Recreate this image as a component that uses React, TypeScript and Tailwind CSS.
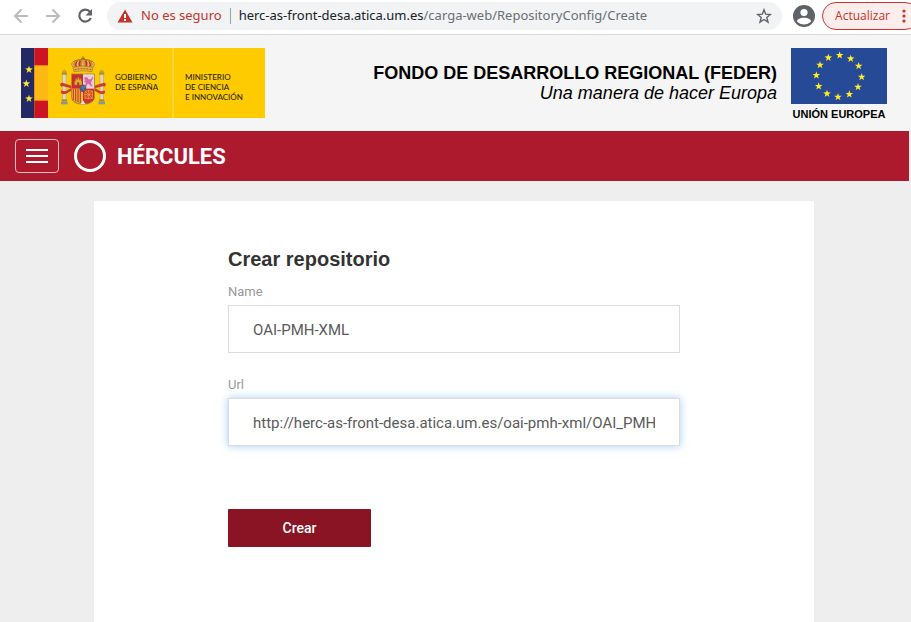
import React from "react";

const STAR = "0,-12 2.8,-3.9 11.4,-3.7 4.6,1.5 7.1,9.7 0,4.8 -7.1,9.7 -4.6,1.5 -11.4,-3.7 -2.8,-3.9";

const EU_STARS = [
  [146, 22], [179, 32], [203, 54], [212, 87], [201, 117], [175, 139],
  [141, 147], [108, 137], [83, 115], [76, 82], [87, 51], [112, 29],
];

function BrowserBar() {
  return (
    <div className="flex h-[35px] items-center overflow-hidden border-b border-[#d9dadb] bg-white pb-[3px] pl-[11px] font-['Noto_Sans','Open_Sans',sans-serif]">
      <div className="flex shrink-0 gap-3">
        <button aria-label="Atrás" className="text-[#babcbe]">
          <svg className="size-5" viewBox="0 0 20 20" fill="none" stroke="currentColor" strokeWidth="2"><path d="M17 10H4M10.5 3.5 4 10l6.5 6.5" /></svg>
        </button>
        <button aria-label="Adelante" className="text-[#babcbe]">
          <svg className="size-5" viewBox="0 0 20 20" fill="none" stroke="currentColor" strokeWidth="2"><path d="M3 10h13M9.5 3.5 16 10l-6.5 6.5" /></svg>
        </button>
        <button aria-label="Recargar" className="text-[#5f6368]">
          <svg className="size-5" viewBox="0 0 20 20"><path d="M15 5.800A6 6 0 1 0 15.800 12" fill="none" stroke="currentColor" strokeWidth="2.2" /><path d="M17 3v6.500H10.500z" fill="currentColor" /></svg>
        </button>
      </div>
      <div className="ml-3 flex h-7 min-w-0 flex-1 items-center rounded-full bg-[#f1f3f4] pl-[10px] pr-[10px] text-[13px]">
        <svg className="size-4 shrink-0" viewBox="0 0 16 16"><path d="M8 1.500 15.500 14.500H.5z" fill="#c5332a" /><path d="M7 6h2v4H7zM7 11h2v2H7z" fill="#fff" /></svg>
        <span className="ml-2 shrink-0 text-[#c5332a]">No es seguro</span>
        <span className="mx-2 h-4 w-px shrink-0 bg-[#9aa0a6]" />
        <span className="min-w-0 flex-1 truncate text-[#6b6f74]">
          <span className="text-[#202124]">herc-as-front-desa.atica.um.es</span>/carga-web/RepositoryConfig/Create
        </span>
        <button aria-label="Añadir a marcadores" className="shrink-0">
          <svg className="size-4" viewBox="0 0 16 16" fill="none" stroke="#5f6368" strokeWidth="1.4"><path d="m8 1.800 1.700 4.400 4.700.3-3.600 3 1.200 4.600L8 11.500l-4 2.600 1.200-4.600-3.600-3 4.700-.3z" /></svg>
        </button>
      </div>
      <button aria-label="Perfil" className="ml-[10px] shrink-0">
        <svg className="size-6" viewBox="0 0 24 24"><circle cx="12" cy="12" r="11" fill="#5f6368" /><circle cx="12" cy="8.5" r="3.6" fill="#fff" /><path d="M5 17.500c0-5 14-5 14 0-3.500 4-10.500 4-14 0z" fill="#fff" /></svg>
      </button>
      <button className="ml-[6px] -mr-2 flex h-7 shrink-0 items-center gap-3 rounded-full border border-[#d0312a] bg-[#fdeeed] pl-3 pr-3 font-['Open_Sans',sans-serif] text-xs text-[#c5332a]">
        Actualizar
        <svg className="h-4 w-1" viewBox="0 0 4 16" fill="currentColor"><circle cx="2" cy="3" r="1.6" /><circle cx="2" cy="8" r="1.6" /><circle cx="2" cy="13" r="1.6" /></svg>
      </button>
    </div>
  );
}

function Pillar() {
  return (
    <g>
      <path d="M36 70h10v-4l-5-4-5 4z" fill="#d8a63a" stroke="#7d6a3a" strokeWidth="1" />
      <rect x="33" y="70" width="16" height="6" fill="#b98c25" />
      <rect x="36" y="76" width="10" height="76" fill="#dcd8c8" stroke="#8e8a78" strokeWidth="1" />
      <rect x="33" y="150" width="16" height="7" fill="#b98c25" />
      <path d="M31 157h20v8H31z" fill="#7e9aa2" />
      <path d="M28 106q2-9 12-4l22 7v8l-24-6q-6-2-5 3zM50 123l12-7v8l-16 9q-10 4-16-3l3-7q8 6 17 0z" fill="#cf3a33" />
    </g>
  );
}

function CoatOfArms() {
  return (
    <svg className="h-[52px] w-[50px] shrink-0" viewBox="22 20 150 156" aria-hidden="true">
      <Pillar />
      <g transform="translate(194 0) scale(-1 1)"><Pillar /></g>
      <path d="M72 58q-16-14-3-22 10-6 28-6t28 6q13 8-3 22z" fill="#d9892c" stroke="#8d6a22" strokeWidth="2" />
      <path d="M79 55q-8-12 2-18M89 54q-5-12 0-20M105 54q5-12 0-20M115 55q8-12-2-18" fill="none" stroke="#b5342c" strokeWidth="4" />
      <path d="M97 32v26M84 35q-8 8-1 22M110 35q8 8 1 22M69 38q-7 8 4 19M125 38q7 8-4 19" fill="none" stroke="#f6e5a8" strokeWidth="3" strokeDasharray="3 1" />
      <path d="M95 21h4v4h4v4h-4v5h-4v-5h-4v-4h4z" fill="#a67b22" />
      <path d="M67 54q30-8 60 0l-3 13q-27-5-54 0z" fill="#e3b341" stroke="#8a6a25" strokeWidth="1.5" />
      <path d="M72 61q25-6 50 0" fill="none" stroke="#b83132" strokeWidth="3" strokeDasharray="5 4" />
      <path d="M63 74h68v71q0 18-34 20-34-2-34-20z" fill="#d8a63a" stroke="#8b6b42" strokeWidth="2" />
      <path d="M64 75h33v43H64z" fill="#cf2932" />
      <path d="M97 75h33v43H97z" fill="#e5d3dc" />
      <path d="M97 118h33v27q0 12-24 18l-9-5z" fill="#cb3430" />
      <path d="M64 118h33v40q-33-2-33-16z" fill="#f0bd2c" />
      <path d="M68 118v34M75 118v38M82 118v40M89 118v42" stroke="#c93431" strokeWidth="3.5" />
      <path d="M71 108V94h3v-8h4v4h3v-7h5v7h3v-4h3v8h2v14h-9v-8h-5v8z" fill="#e2a72b" stroke="#6f4a1f" strokeWidth="1" />
      <path d="M103 84h7l3 6h8l4-8 3 4-4 7-3 9 5 9h-6l-5-7-5 1-3 7h-5l4-12-6-3 4-5-4-4z" fill="#d569a5" />
      <path d="M103 125h22v22h-22zM103 125l22 22M125 125l-22 22M114 122v28M101 136h26" fill="none" stroke="#eda234" strokeWidth="2.5" />
      <path d="m90 165 7-12 7 12z" fill="#eee8da" />
      <ellipse cx="97" cy="117" rx="9" ry="11" fill="#2668a0" stroke="#b73a43" strokeWidth="2" />
      <path d="M93 113h3M99 113h3M96 119h3" stroke="#f0cf55" strokeWidth="2" />
    </svg>
  );
}

function GovernmentLogo() {
  return (
    <div className="flex h-[70px] w-[244px] shrink-0 bg-[#fecb00] font-[Lato,sans-serif] text-[8px] leading-[10px] font-medium text-[#2b2506]">
      <svg className="h-[70px] w-[27px] shrink-0" viewBox="0 0 81 210" aria-hidden="true">
        <path d="M0 0h40v210H0z" fill="#232a63" />
        <path d="M40 0h41v210H40z" fill="#cd1424" />
        <path d="M40 52h41v106H40z" fill="#fdb813" />
        <g fill="#ffe83b">
          <polygon points={STAR} transform="translate(24 65)" />
          <polygon points={STAR} transform="translate(16 107)" />
          <polygon points={STAR} transform="translate(24 152)" />
        </g>
      </svg>
      <div className="flex flex-1 items-start border-r-2 border-[#ffd634] pl-[10px] pt-2">
        <CoatOfArms />
        <p className="pl-[7px] pt-4">GOBIERNO<br />DE ESPAÑA</p>
      </div>
      <p className="w-[91px] shrink-0 pl-[11px] pt-6">MINISTERIO<br />DE CIENCIA<br />E INNOVACIÓN</p>
    </div>
  );
}

function FundingHeader() {
  return (
    <header className="flex h-24 justify-between bg-[#f5f5f5] pl-[21px] pr-6 pt-[13px] font-['Liberation_Sans',Arial,sans-serif] text-black">
      <GovernmentLogo />
      <div className="flex gap-[14px]">
        <div className="pt-[15px] text-right text-lg leading-5">
          <p className="font-bold">FONDO DE DESARROLLO REGIONAL (FEDER)</p>
          <p className="italic">Una manera de hacer Europa</p>
        </div>
        <div className="w-24 text-center">
          <svg className="h-14 w-24" viewBox="0 0 288 168" role="img" aria-label="Bandera de la Unión Europea">
            <path d="M0 0h288v168H0z" fill="#264a96" />
            {EU_STARS.map(([x, y]) => (
              <polygon key={`${x}-${y}`} points={STAR} fill="#ffed28" transform={`translate(${x} ${y})`} />
            ))}
          </svg>
          <p className="whitespace-nowrap pt-[2px] text-[11px] leading-4 font-bold">UNIÓN EUROPEA</p>
        </div>
      </div>
    </header>
  );
}

function Navbar() {
  return (
    <nav className="mr-[2px] flex h-[50px] items-center bg-[#ad1a2d] pl-[15px] text-white">
      <button aria-label="Abrir menú" className="flex h-[34px] w-11 flex-col items-center justify-center gap-[4px] rounded border border-[#e6bcc2]">
        <span className="h-[2px] w-[22px] bg-white" />
        <span className="h-[2px] w-[22px] bg-white" />
        <span className="h-[2px] w-[22px] bg-white" />
      </button>
      <a href="#" className="ml-[15px] flex items-center gap-[11px] text-[22px] font-bold">
        <span className="size-8 rounded-full border-3 border-white" />
        HÉRCULES
      </a>
    </nav>
  );
}

const fieldClass =
  "h-12 w-full border border-[#e0dadd] bg-white px-6 pt-[2px] text-[15px] text-[#5a5a5a] outline-none";

const labelClass = "mb-[3px] block text-[13px] leading-5 text-[#999]";

export default function App() {
  return (
    <div className="flex min-h-screen flex-col bg-[#eeeeee] font-[Roboto,sans-serif]">
      <BrowserBar />
      <FundingHeader />
      <Navbar />
      <main className="mr-[3px] flex flex-1 justify-center pt-5">
        <form className="w-full max-w-[720px] bg-white px-[134px] pt-[46px]" onSubmit={(e) => e.preventDefault()}>
          <h1 className="mb-[11px] font-['Liberation_Sans',Arial,sans-serif] text-xl leading-6 font-bold text-[#333]">Crear repositorio</h1>
          <label htmlFor="name" className={labelClass}>Name</label>
          <input id="name" type="text" className={fieldClass} defaultValue="OAI-PMH-XML" />
          <label htmlFor="url" className={`${labelClass} mt-[22px]`}>Url</label>
          <input
            id="url"
            type="text"
            className={`${fieldClass} shadow-[0_0_8px_rgba(102,175,233,0.6)]`}
            defaultValue="http://herc-as-front-desa.atica.um.es/oai-pmh-xml/OAI_PMH"
          />
          <button type="submit" className="mt-[63px] block h-[38px] w-[143px] rounded-[1px] bg-[#8a1424] text-sm font-medium text-white">Crear</button>
        </form>
      </main>
    </div>
  );
}
